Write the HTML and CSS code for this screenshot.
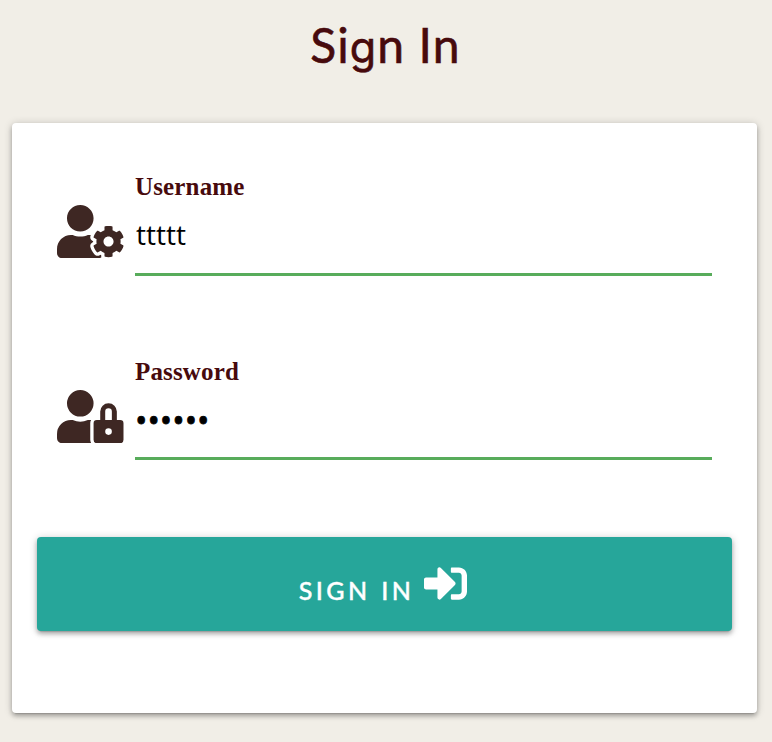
FILE: index.html
```html
<!DOCTYPE html>
<html lang="en">
<head>
<meta charset="utf-8">
<title>Sign In</title>
<link rel="stylesheet" href="styles.css">
</head>
<body>
<h1 class="title">Si<span class="title-g">g</span>n In</h1>
<form class="card">
  <div class="field">
    <svg class="field-icon" viewBox="0 0 640 512" aria-hidden="true"><path d="M610.5 373.3c2.6-14.1 2.6-28.5 0-42.6l25.8-14.9c3-1.7 4.3-5.2 3.3-8.5-6.7-21.6-18.2-41.2-33.2-57.4-2.3-2.5-6-3.1-9-1.4l-25.8 14.9c-10.9-9.3-23.4-16.5-36.9-21.3v-29.8c0-3.4-2.4-6.4-5.7-7.1-22.3-5-45-4.8-66.2 0-3.3.7-5.7 3.7-5.7 7.1v29.8c-13.5 4.8-26 12-36.9 21.3l-25.8-14.9c-2.9-1.7-6.7-1.1-9 1.4-15 16.2-26.5 35.8-33.2 57.4-1 3.3.4 6.8 3.3 8.5l25.8 14.9c-2.6 14.1-2.6 28.5 0 42.6l-25.8 14.9c-3 1.7-4.3 5.2-3.3 8.5 6.7 21.6 18.2 41.1 33.2 57.4 2.3 2.5 6 3.1 9 1.4l25.8-14.9c10.9 9.3 23.4 16.5 36.9 21.3v29.8c0 3.4 2.4 6.4 5.7 7.1 22.3 5 45 4.8 66.2 0 3.3-.7 5.7-3.7 5.7-7.1v-29.8c13.5-4.8 26-12 36.9-21.3l25.8 14.9c2.9 1.7 6.7 1.1 9-1.4 15-16.2 26.5-35.8 33.2-57.4 1-3.3-.4-6.8-3.3-8.5l-25.8-14.9zM496 400.5c-26.8 0-48.5-21.8-48.5-48.5s21.8-48.5 48.5-48.5 48.5 21.8 48.5 48.5-21.7 48.5-48.5 48.5zM224 256c70.7 0 128-57.3 128-128S294.7 0 224 0 96 57.3 96 128s57.3 128 128 128zm201.2 226.5c-2.3-1.2-4.6-2.6-6.8-3.9l-7.9 4.6c-6 3.4-12.8 5.3-19.6 5.3-10.9 0-21.4-4.6-28.9-12.6-18.3-19.8-32.3-43.9-40.2-69.6-5.5-17.7 1.9-36.4 17.9-45.7l7.9-4.6c-.1-2.6-.1-5.2 0-7.8l-7.9-4.6c-16-9.2-23.4-28-17.9-45.7.9-2.9 2.2-5.8 3.2-8.7-3.8-.3-7.5-1.2-11.4-1.2h-16.7c-22.2 10.2-46.9 16-72.9 16s-50.6-5.8-72.9-16h-16.7C60.2 288 0 348.2 0 422.4V464c0 26.5 21.5 48 48 48h352c10.1 0 19.5-3.2 27.2-8.5-1.2-3.8-2-7.7-2-11.8v-9.2z"/></svg>
    <div class="control">
      <label class="label" for="username">Username</label>
      <input class="input" id="username" type="text" value="ttttt">
    </div>
  </div>
  <div class="field">
    <svg class="field-icon" viewBox="0 0 640 512" aria-hidden="true"><path d="M224 256A128 128 0 1 0 96 128a128 128 0 0 0 128 128zm96 64a63.08 63.08 0 0 1 8.1-30.5c-4.8-.5-9.5-1.5-14.5-1.5h-16.7a174.08 174.08 0 0 1-145.8 0h-16.7A134.43 134.43 0 0 0 0 422.4V464a48 48 0 0 0 48 48h280.9a63.54 63.54 0 0 1-8.9-32zm288-32h-32v-80a80 80 0 0 0-160 0v80h-32a32 32 0 0 0-32 32v160a32 32 0 0 0 32 32h224a32 32 0 0 0 32-32V320a32 32 0 0 0-32-32zM496 432a32 32 0 1 1 32-32 32 32 0 0 1-32 32zm32-144h-64v-80a32 32 0 0 1 64 0z"/></svg>
    <div class="control">
      <label class="label" for="password">Password</label>
      <input class="input input-password" id="password" type="password" value="tttttt">
    </div>
  </div>
  <button class="submit" type="button"><span class="submit-text">SIGN IN</span><svg class="submit-icon" viewBox="0 0 512 512" aria-hidden="true"><path d="M416 448h-84c-6.600 0-12-5.400-12-12v-40c0-6.600 5.400-12 12-12h84c17.700 0 32-14.300 32-32V160c0-17.700-14.300-32-32-32h-84c-6.600 0-12-5.400-12-12V76c0-6.600 5.400-12 12-12h84c53 0 96 43 96 96v192c0 53-43 96-96 96zm-47-209L201 71c-15-15-41-4.500-41 17v96H24c-13.300 0-24 10.700-24 24v96c0 13.300 10.700 24 24 24h136v96c0 21.500 26 32 41 17l168-168c9.300-9.400 9.300-24.600 0-34z"/></svg></button>
</form>
</body>
</html>
```
FILE: styles.css
```css
* { box-sizing: border-box; }
body {
  margin: 0;
  height: 742px;
  overflow: hidden;
  background: #f1eee7;
}
.title {
  margin: 0;
  height: 123px;
  padding-top: 15px;
  padding-right: 1px;
  font: 400 48px/60px Lato, sans-serif;
  letter-spacing: 1.1px;
  text-align: center;
  color: #470a0d;
  -webkit-text-stroke: .6px #470a0d;
}
.title-g {
  font-family: Inter, sans-serif;
  font-size: 43px;
  line-height: 1;
}
.card {
  width: 745px;
  height: 590px;
  margin-left: 12px;
  padding: 45px 45px 0 45px;
  border-radius: 4px;
  background: #fff;
  box-shadow: 0 3px 4px rgba(0,0,0,.24), 0 4px 1px -3px rgba(0,0,0,.12), 0 1px 8px rgba(0,0,0,.2);
}
.field {
  display: flex;
  height: 185px;
}
.field + .field {
  height: 184px;
}
.field-icon {
  width: 66.5px;
  height: 53.2px;
  margin: 37.3px 11.5px 0 0;
  fill: #3e2723;
}
.control {
  display: flex;
  flex-direction: column;
  width: 577px;
}
.label {
  height: 37px;
  font: bold 25px/38px "Liberation Serif", serif;
  letter-spacing: .15px;
  color: #470a0d;
}
.input {
  width: 577px;
  height: 71px;
  padding: 0 0 11px 1px;
  border: 0;
  border-bottom: 3px solid #58ac5b;
  outline: 0;
  background: transparent;
  font: 28px "Open Sans", sans-serif;
  color: #000;
}
.input-password {
  height: 70px;
  padding: 0 0 8px;
  font-size: 33px;
  -webkit-text-stroke: .8px #000;
}
.submit {
  display: flex;
  justify-content: center;
  align-items: center;
  width: 695px;
  height: 94px;
  margin: 0 0 0 -20px;
  padding: 0 3px 0 0;
  border: 0;
  border-radius: 4px;
  background: #26a69a;
  color: #fff;
  box-shadow: 0 3px 4px rgba(0,0,0,.24), 0 4px 1px -3px rgba(0,0,0,.12), 0 1px 8px rgba(0,0,0,.2);
}
.submit-text {
  margin: 11px 10px 0 0;
  font: 500 25px/32px Lato, sans-serif;
  letter-spacing: 3.4px;
  word-spacing: 1px;
  -webkit-text-stroke: .4px #fff;
}
.submit-icon {
  width: 43px;
  height: 43px;
  margin-top: -1px;
  fill: #fff;
}
```
